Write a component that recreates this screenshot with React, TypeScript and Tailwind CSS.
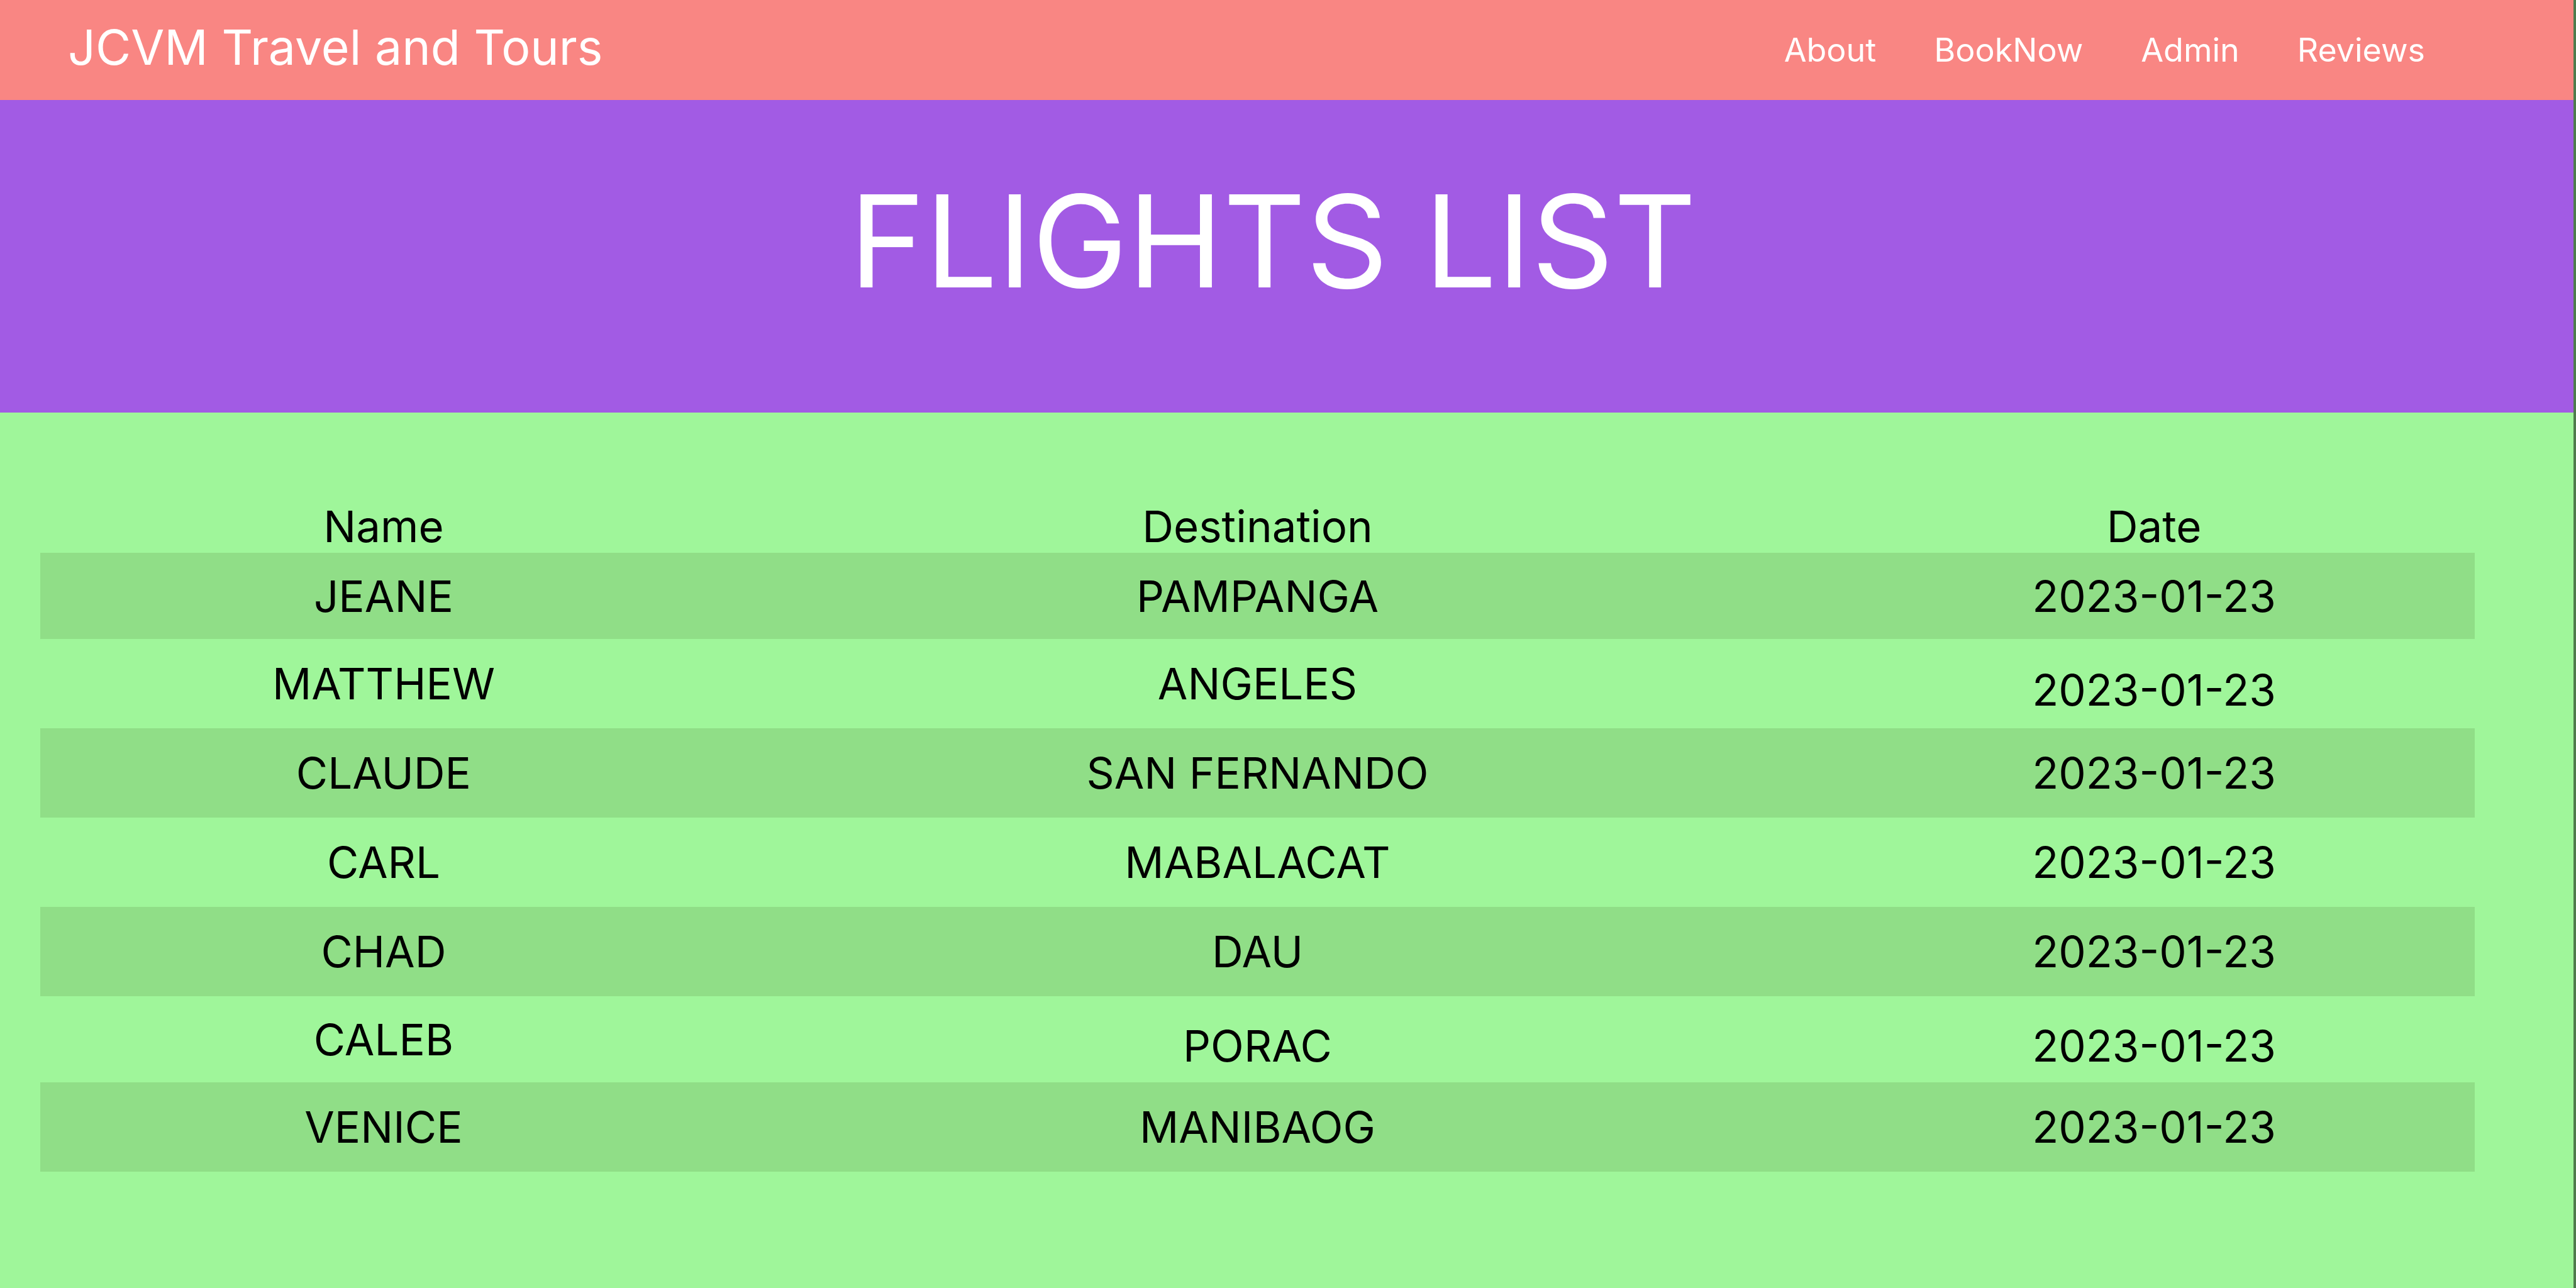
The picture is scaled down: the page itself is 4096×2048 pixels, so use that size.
const links = ["About", "BookNow", "Admin", "Reviews"];

type Flight = {
  cells: [string, string, string];
  compact?: boolean;
  // index of the first cell whose text sits lower in the row
  lowFrom?: number;
};

const flights: Flight[] = [
  { cells: ["JEANE", "PAMPANGA", "2023-01-23"], compact: true },
  { cells: ["MATTHEW", "ANGELES", "2023-01-23"], lowFrom: 2 },
  { cells: ["CLAUDE", "SAN FERNANDO", "2023-01-23"] },
  { cells: ["CARL", "MABALACAT", "2023-01-23"] },
  { cells: ["CHAD", "DAU", "2023-01-23"] },
  { cells: ["CALEB", "PORAC", "2023-01-23"], compact: true, lowFrom: 1 },
  { cells: ["VENICE", "MANIBAOG", "2023-01-23"] },
];

export default function App() {
  return (
    <div className="min-h-screen border-r-4 border-black/50 bg-[#9ff69a] font-['Inter',sans-serif] text-black">
      <header className="flex h-[159px] items-center justify-between bg-[#f98683] pr-[236px] pl-[108px] text-white">
        <a href="#" className="pb-2 text-[77px] leading-none">
          JCVM Travel and Tours
        </a>
        <nav className="flex gap-[92px] text-[52px] leading-none">
          {links.map((l) => (
            <a key={l} href="#">
              {l}
            </a>
          ))}
        </nav>
      </header>
      <section className="flex h-[497px] justify-center bg-[#a25be4] pt-[116px] pr-[44px] text-white">
        <h1 className="text-[204px] leading-[216px]">FLIGHTS LIST</h1>
      </section>
      <main className="pt-[139px] pr-[157px] pl-[64px]">
        <table className="w-full table-fixed text-center text-[69px] leading-[84px]">
          <colgroup>
            <col className="w-[28%]" />
            <col className="w-[44%]" />
            <col className="w-[28%]" />
          </colgroup>
          <thead>
            <tr className="h-[84px]">
              <th className="pl-2 font-normal">Name</th>
              <th className="font-normal">Destination</th>
              <th className="pl-16 font-normal">Date</th>
            </tr>
          </thead>
          <tbody>
            {flights.map(({ cells, compact, lowFrom = 3 }) => (
              <tr
                key={cells[0]}
                className={`odd:bg-[#90de87] ${compact ? "h-[137px]" : "h-[142px]"}`}
              >
                {cells.map((cell, i) => (
                  <td
                    key={i}
                    className={`first:pl-2 last:pl-16 ${i >= lowFrom ? "pt-5" : ""}`}
                  >
                    {cell}
                  </td>
                ))}
              </tr>
            ))}
          </tbody>
        </table>
      </main>
    </div>
  );
}
